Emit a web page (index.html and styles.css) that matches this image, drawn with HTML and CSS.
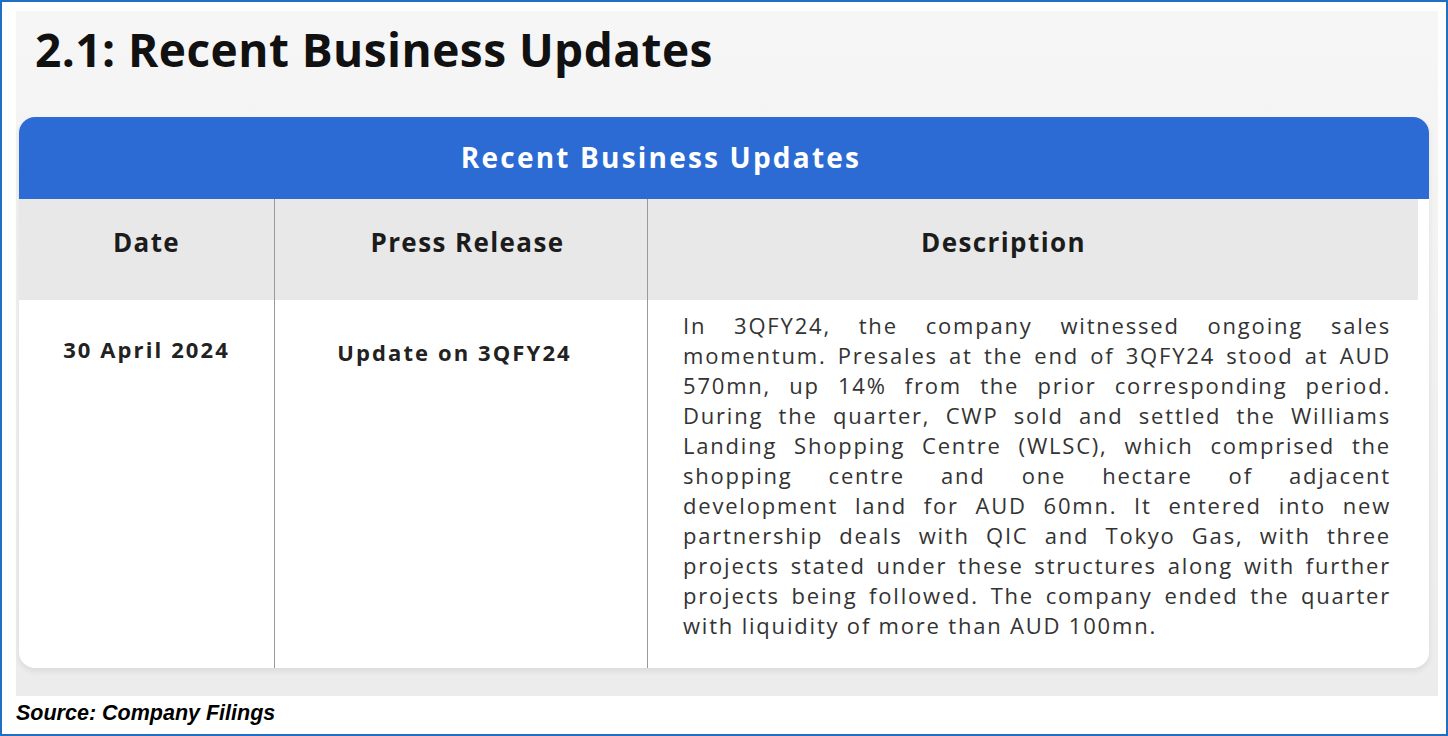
FILE: index.html
```html
<!DOCTYPE html>
<html>
<head>
<meta charset="utf-8">
<link rel="stylesheet" href="styles.css">
</head>
<body>
<div class="frame">
  <div class="panel">
    <h1 class="title">2.1: Recent Business Updates</h1>
    <div class="card">
      <div class="card-head">Recent Business Updates</div>
      <div class="table">
        <div class="th c1">Date</div>
        <div class="th c2">Press Release</div>
        <div class="th c3"><span>Description</span></div>
        <div class="td c1 date">30 April 2024</div>
        <div class="td c2 release">Update on 3QFY24</div>
        <div class="td c3 desc">
          <span class="ln">In 3QFY24, the company witnessed ongoing sales</span>
          <span class="ln">momentum. Presales at the end of 3QFY24 stood at AUD</span>
          <span class="ln">570mn, up 14% from the prior corresponding period.</span>
          <span class="ln">During the quarter, CWP sold and settled the Williams</span>
          <span class="ln">Landing Shopping Centre (WLSC), which comprised the</span>
          <span class="ln">shopping centre and one hectare of adjacent</span>
          <span class="ln">development land for AUD 60mn. It entered into new</span>
          <span class="ln">partnership deals with QIC and Tokyo Gas, with three</span>
          <span class="ln">projects stated under these structures along with further</span>
          <span class="ln">projects being followed. The company ended the quarter</span>
          <span class="ln last">with liquidity of more than AUD 100mn.</span>
        </div>
      </div>
    </div>
  </div>
  <div class="source">Source: Company Filings</div>
</div>
</body>
</html>
```

FILE: styles.css
```css
* { box-sizing: border-box; }
html, body { margin: 0; padding: 0; background: #ffffff; }
body { width: 1448px; height: 736px; overflow: hidden; }

.frame {
  width: 1448px;
  height: 736px;
  border: 2px solid #1f6fc5;
  padding: 9px 8px 0 14px;
  background: #ffffff;
}

.panel {
  width: 1422px;
  height: 685px;
  background: linear-gradient(180deg, #f6f6f6 0%, #f0f0f0 60%, #ececec 100%);
  padding: 0 0 0 3px;
  font-family: "Open Sans", sans-serif;
}

.title {
  margin: 0;
  padding: 15px 0 0 16px;
  height: 106px;
  font-size: 46px;
  line-height: 46px;
  font-weight: 700;
  color: #111111;
  letter-spacing: 0.45px;
}

.card {
  width: 1410px;
  height: 551px;
  background: #ffffff;
  border-radius: 16px;
  overflow: hidden;
  box-shadow: 0 3px 6px rgba(0, 0, 0, 0.08);
  display: flex;
  flex-direction: column;
}

.card-head {
  height: 82px;
  background: #2b6bd3;
  color: #ffffff;
  font-size: 28px;
  font-weight: 700;
  letter-spacing: 2.2px;
  display: flex;
  align-items: center;
  justify-content: center;
  padding-right: 126px;
  padding-bottom: 2px;
}

.table {
  flex: 1;
  display: grid;
  grid-template-columns: 255px 373px 1fr;
  grid-template-rows: 101px 1fr;
}

.th {
  background: #e8e8e8;
  font-size: 26px;
  font-weight: 700;
  letter-spacing: 1.4px;
  color: #1c1c1c;
  display: flex;
  align-items: center;
  justify-content: center;
  padding-bottom: 16px;
}

.c2, .c3 { border-left: 1px solid #9a9a9a; }

.th.c2 { padding-left: 13px; }
.th.c3 { background: transparent; padding: 0 11px 0 0; align-items: stretch; }
.th.c3 span {
  flex: 1;
  background: #e8e8e8;
  display: flex;
  align-items: center;
  justify-content: center;
  padding: 0 59px 16px 0;
}

.td {
  font-size: 22px;
  color: #222222;
}

.date, .release {
  font-weight: 700;
  text-align: center;
  line-height: 30px;
  letter-spacing: 2.1px;
}
.date { padding-top: 34px; }
.release { padding-top: 37px; padding-right: 13px; }

.desc {
  padding: 10px 38px 0 35px;
  line-height: 30px;
  color: #333333;
  letter-spacing: 1.8px;
}
.ln {
  display: block;
  text-align: justify;
  text-align-last: justify;
}
.ln.last { text-align-last: left; }

.source {
  font-family: "Liberation Sans", Arial, sans-serif;
  font-style: italic;
  font-weight: 700;
  font-size: 21.5px;
  color: #000000;
  padding: 5px 0 0 0;
}
```
